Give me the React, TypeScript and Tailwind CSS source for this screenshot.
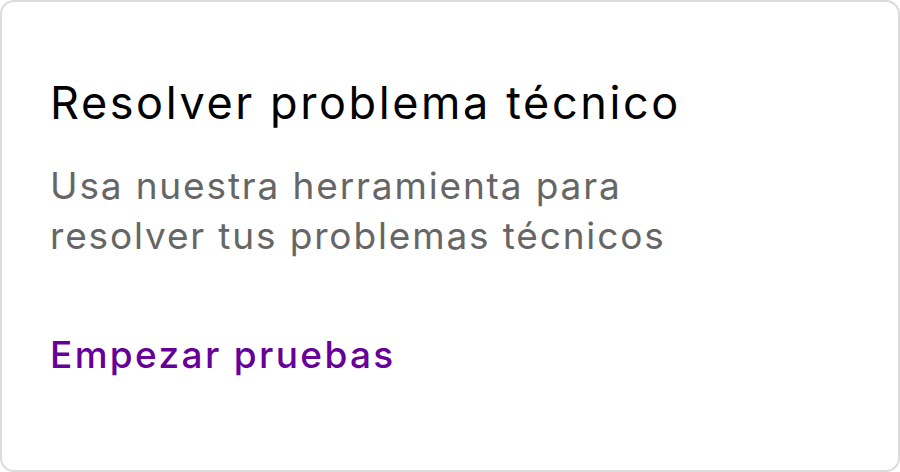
export default function App() {
  return (
    <div className="w-[900px] h-[472px] bg-white">
      <div
        className="h-full w-full rounded-[14px] border-2 border-[#dcdcdc] bg-white px-[48px] pt-[73px]"
        style={{ fontFamily: "Inter, 'Noto Sans', sans-serif" }}
      >
        <h1 className="text-[45px] leading-[56px] font-normal text-black tracking-[2.6px]">
          Resolver problema técnico
        </h1>
        <p className="mt-[30px] text-[37px] leading-[50px] text-[#666666] tracking-[1.85px] w-[700px]">
          Usa nuestra herramienta para
          <br />
          resolver tus problemas técnicos
        </p>
        <a href="#" className="mt-[72px] block text-[37px] leading-[44px] font-medium text-[#660099] tracking-[2.35px]">
          Empezar pruebas
        </a>
      </div>
    </div>
  );
}
